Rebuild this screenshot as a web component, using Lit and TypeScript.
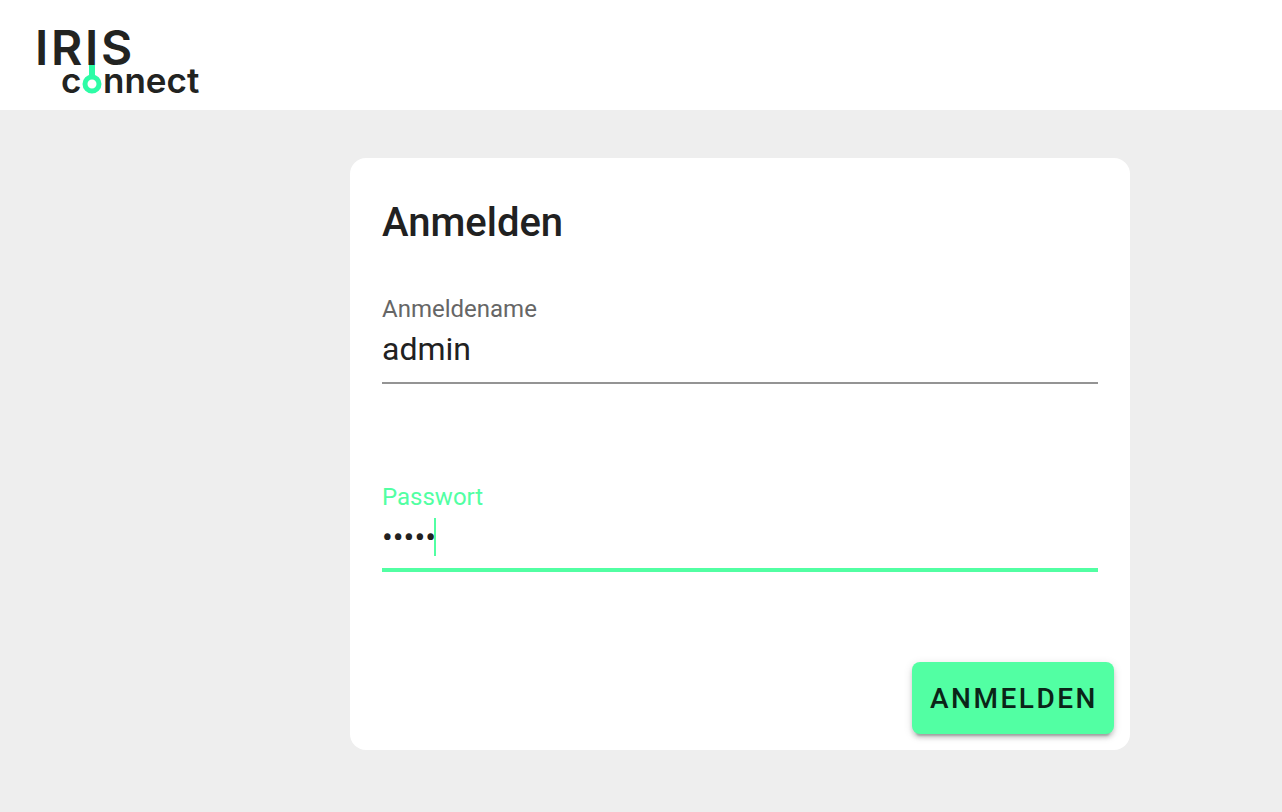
import { LitElement, html, css } from "lit";
import { customElement, state, query } from "lit/decorators.js";

@customElement("iris-logo")
class IrisLogo extends LitElement {
  static styles = css`
    :host {
      display: block;
    }
    .logo {
      display: block;
      width: 184px;
      height: 88px;
      overflow: visible;
      font-family: Inter, "Liberation Sans", sans-serif;
      font-weight: 600;
      fill: #222321;
    }
    .upper {
      font-size: 48px;
    }
    .lower {
      font-size: 35px;
    }
    .stem {
      fill: #2dfca6;
    }
    .ring {
      fill: none;
      stroke: #2dfca6;
      stroke-width: 5;
    }
  `;

  render() {
    return html`
      <svg class="logo" viewBox="0 0 184 88" role="img" aria-label="IRIS connect">
        <text class="upper" x="3" y="49">I</text>
        <text class="upper" x="19" y="49">R</text>
        <text class="upper" x="53" y="49">I</text>
        <text class="upper" x="69" y="49">S</text>
        <text class="lower" x="29" y="77">c</text>
        <rect class="stem" x="57" y="49" width="6" height="12"></rect>
        <circle class="ring" cx="60" cy="68" r="7"></circle>
        <text class="lower" x="71" y="77">nnect</text>
      </svg>
    `;
  }
}

@customElement("login-card")
class LoginCard extends LitElement {
  @state() private caret = true;
  @query("#password") private password!: HTMLInputElement;

  static styles = css`
    :host {
      display: block;
      width: 100%;
      max-width: 780px;
    }
    .card {
      background: #fff;
      border-radius: 16px;
      padding: 32px 16px 16px;
    }
    .title {
      margin: 0 16px 38px;
      font-size: 40px;
      line-height: 66px;
      font-weight: 500;
    }
    .field {
      display: flex;
      flex-direction: column;
      margin: 0 16px 98px;
      padding-bottom: 8px;
      border-bottom: 2px solid #949494;
    }
    .field.active {
      margin-bottom: 90px;
      padding-bottom: 6px;
      border-bottom: 4px solid #52ffa3;
    }
    .label {
      font-size: 24px;
      line-height: 30px;
      color: #666;
    }
    .active .label {
      color: #52ffa3;
    }
    .control {
      position: relative;
      display: flex;
    }
    .input {
      flex: 1;
      min-width: 0;
      height: 50px;
      box-sizing: border-box;
      padding: 0;
      border: 0;
      outline: 0;
      background: transparent;
      color: #212121;
      font: 400 32px/40px Roboto, sans-serif;
      caret-color: #52ffa3;
    }
    .with-caret {
      caret-color: transparent;
    }
    .caret {
      position: absolute;
      left: 52px;
      top: 6px;
      width: 2px;
      height: 38px;
      background: #52ffa3;
    }
    .actions {
      display: flex;
      justify-content: flex-end;
    }
    .submit {
      height: 72px;
      padding: 2px 16px 0 18px;
      border: 0;
      border-radius: 8px;
      background: #52ffa3;
      color: #0b2418;
      font: 500 28px/40px Roboto, sans-serif;
      letter-spacing: 0.09em;
      text-transform: uppercase;
      cursor: pointer;
      box-shadow:
        0 6px 2px -4px rgba(0, 0, 0, 0.2),
        0 4px 4px 0 rgba(0, 0, 0, 0.14),
        0 2px 10px 0 rgba(0, 0, 0, 0.12);
    }
  `;

  firstUpdated() {
    this.password.focus();
  }

  render() {
    return html`
      <form class="card" @submit=${(e: Event) => e.preventDefault()}>
        <h1 class="title">Anmelden</h1>
        <div class="field">
          <label class="label" for="username">Anmeldename</label>
          <div class="control">
            <input class="input" id="username" type="text" value="admin" autocomplete="username" />
          </div>
        </div>
        <div class="field active">
          <label class="label" for="password">Passwort</label>
          <div class="control">
            <input
              class="input ${this.caret ? "with-caret" : ""}"
              id="password"
              type="password"
              value="admin"
              autocomplete="current-password"
              @input=${() => (this.caret = false)}
              @blur=${() => (this.caret = false)}
            />
            ${this.caret ? html`<span class="caret"></span>` : null}
          </div>
        </div>
        <div class="actions">
          <button class="submit" type="submit">Anmelden</button>
        </div>
      </form>
    `;
  }
}

@customElement("app-root")
class AppRoot extends LitElement {
  static styles = css`
    :host {
      display: flex;
      flex-direction: column;
      min-height: 100vh;
      background: #eee;
      color: #212121;
      font-family: Roboto, sans-serif;
    }
    .header {
      display: flex;
      padding: 16px 32px 6px;
      background: #fff;
    }
    .main {
      display: flex;
      justify-content: center;
      padding: 48px 0 48px 198px;
    }
  `;

  render() {
    return html`
      <header class="header"><iris-logo></iris-logo></header>
      <main class="main"><login-card></login-card></main>
    `;
  }
}
